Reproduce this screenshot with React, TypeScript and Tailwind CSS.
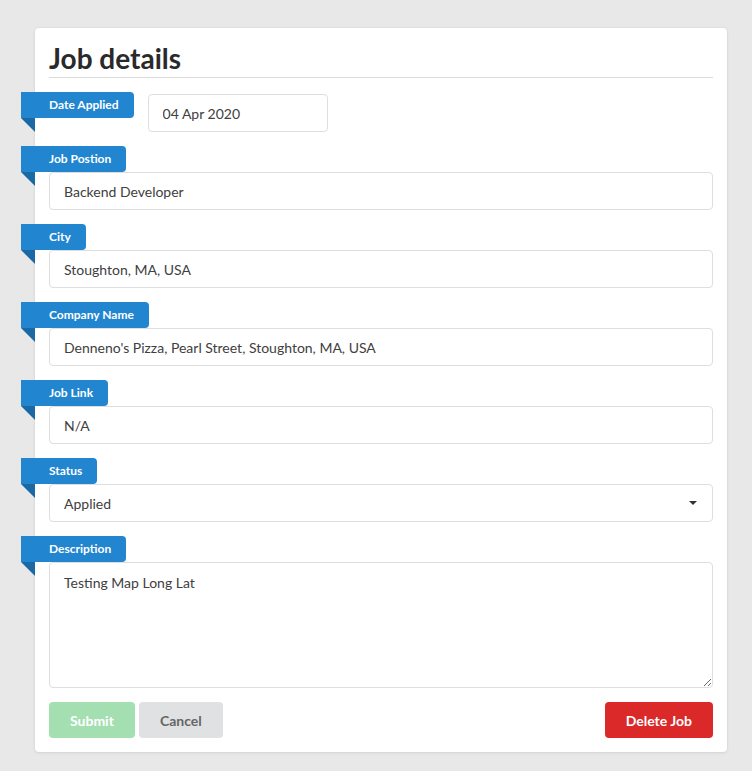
import React from 'react';

const FONT = { fontFamily: 'Lato, "Open Sans", Arial, sans-serif' };

function Ribbon({ text }: { text: string }) {
  return (
    <div className="relative flex w-fit items-center h-[26px] -ml-[28px] pl-[28px] pr-[15px] bg-[#2185d0] text-white text-[12px] font-bold rounded-r-[4px] leading-none">
      {text}
      <span className="absolute left-0 top-full w-0 h-0 border-t-[14px] border-t-[#1a69a4] border-l-[14px] border-l-transparent" />
    </div>
  );
}

const inputCls =
  'block w-full h-[38px] px-[14px] border border-[#dedede] rounded-[4px] text-[14px] text-[#404040] bg-white outline-none';

const fields = [
  { label: 'Job Postion', value: 'Backend Developer' },
  { label: 'City', value: 'Stoughton, MA, USA' },
  { label: 'Company Name', value: "Denneno's Pizza, Pearl Street, Stoughton, MA, USA" },
  { label: 'Job Link', value: 'N/A' },
];

export default function App() {
  return (
    <div className="min-h-[771px] bg-[#e8e8e8] pt-[28px]" style={FONT}>
      <div className="ml-[35px] w-[692px] bg-white rounded-[4px] shadow-[0_1px_3px_0_#d4d4d5,0_0_0_1px_#e2e2e2] p-[14px]">
        <h2 className="text-[28px] font-bold text-[#2a2a2a] leading-[32px] pb-[3px] border-b border-[#dcdcdd]">
          Job details
        </h2>

        <div className="mt-[14px] flex items-start gap-[14px] mb-[14px]">
          <Ribbon text="Date Applied" />
          <input readOnly value="04 Apr 2020" className={`${inputCls} !w-[180px] mt-[2px]`} style={FONT} />
        </div>

        {fields.map((f) => (
          <div key={f.label} className="mb-[14px]">
            <Ribbon text={f.label} />
            <input readOnly value={f.value} className={inputCls} style={FONT} />
          </div>
        ))}

        <div className="mb-[14px]">
          <Ribbon text="Status" />
          <div className={`${inputCls} flex items-center justify-between`}>
            <span>Applied</span>
            <span className="w-0 h-0 border-t-[4px] border-t-[#333] border-x-[4px] border-x-transparent mr-[1px]" />
          </div>
        </div>

        <div className="mb-[14px]">
          <Ribbon text="Description" />
          <textarea
            readOnly
            value="Testing Map Long Lat"
            className="block w-full h-[126px] px-[14px] py-[9px] border border-[#dedede] rounded-[4px] text-[14px] text-[#404040] outline-none"
            style={FONT}
          />
        </div>

        <div className="flex items-center">
          <button className="h-[36px] px-[21px] rounded-[4px] bg-[#a4dfb1] text-white text-[14px] font-bold mr-[4px]">
            Submit
          </button>
          <button className="h-[36px] px-[21px] rounded-[4px] bg-[#e0e1e2] text-[#666] text-[14px] font-bold">
            Cancel
          </button>
          <button className="ml-auto h-[36px] px-[21px] rounded-[4px] bg-[#db2828] text-white text-[14px] font-bold">
            Delete Job
          </button>
        </div>
      </div>
    </div>
  );
}
